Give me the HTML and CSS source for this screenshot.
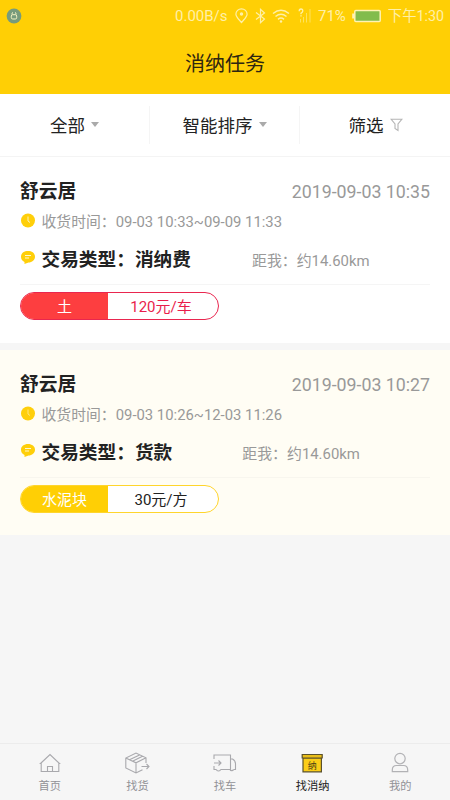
FILE: index.html
```html
<!DOCTYPE html>
<html lang="zh-CN">
<head>
<meta charset="utf-8">
<title>消纳任务</title>
<link rel="stylesheet" href="styles.css">
</head>
<body>
<header class="header">
  <div class="status">
    <svg class="lock" width="16" height="16" viewBox="0 0 16 16"><circle cx="8" cy="8" r="7.400" fill="#779b7c"/><rect x="5.300" y="6.700" width="5.400" height="4.300" rx="1.400" fill="none" stroke="#f4f3c4"/><path d="M6 6.500V5.200L7 4.500M10 6.500V5.200L9 4.500" fill="none" stroke="#f4f3c4"/></svg>
    <span class="speed">0.00B/s</span>
    <svg class="pin" width="13" height="16" viewBox="0 0 13 16" fill="none" stroke="#fff0a8" stroke-width="1.200"><path d="M6.500 14.500C4 11.500.9 8.800.9 6.200a5.600 5.400 0 0 1 11.200 0C12.100 8.800 9 11.500 6.500 14.500z"/><circle cx="6.500" cy="6" r="1.100" fill="#fff0a8"/></svg>
    <svg class="bt" width="11" height="16" viewBox="0 0 11 16" fill="none" stroke="#fff0a8" stroke-width="1.200"><path d="M1 4.500l8.500 6.500-4 3.700V1.300l4 3.700L1 11.500"/></svg>
    <svg class="wifi" width="18" height="16" viewBox="0 0 18 16" fill="none" stroke="#fff0a8" stroke-width="1.500"><path d="M1 5.500Q9-1 17 5.500M3.500 8.500Q9 4 14.500 8.500M6 11.300Q9 8.800 12 11.300"/><circle cx="9" cy="13.500" r="1.200" fill="#fff0a8" stroke="none"/></svg>
    <svg class="signal" width="14" height="16" viewBox="0 0 14 16" fill="none"><path d="M1.200 3.200Q1.200 1 3 1T4.800 3Q4.800 4.200 3 5.200V6.300M3 7.300V8.500" stroke="#fff0a8" stroke-width="1.300"/><path d="M2.500 11v3.500M5.500 9v5.500M8.500 5v9.500M12 1v13.500" stroke="#ffe25c"/></svg>
    <span class="percent">71%</span>
    <svg class="battery" width="30" height="14" viewBox="0 0 30 14"><rect x="2.800" y="1.600" width="25.400" height="10.800" rx="1" fill="#82bc4c" stroke="#fff3b5" stroke-width="1.500"/><path d="M1.200 4.500V9.500" stroke="#fff3b5" stroke-width="2"/></svg>
    <span class="clock">下午1:30</span>
  </div>
  <h1 class="title">消纳任务</h1>
</header>

<nav class="filters">
  <div class="filter">全部<i class="caret"></i></div>
  <div class="filter">智能排序<i class="caret"></i></div>
  <div class="filter filter-last">筛选<svg class="funnel" width="13" height="14" viewBox="0 0 13 14" fill="none" stroke="#b5b5b5" stroke-width="1.100"><path d="M1 1.200H12L8 6V12.500L5 10.500V6z"/></svg></div>
</nav>

<main class="list">
  <article class="card">
    <div class="head"><h2 class="name">舒云居</h2><time class="date">2019-09-03 10:35</time></div>
    <div class="period"><svg class="mark" width="15" height="15" viewBox="0 0 15 15"><circle cx="8" cy="7.500" r="7" fill="#ffcf0a"/><path d="M8 3.500V8L10 9.500" fill="none" stroke="#fff4b8"/></svg>收货时间：09-03 10:33~09-09 11:33</div>
    <div class="deal"><svg class="mark" width="15" height="15" viewBox="0 0 15 15"><path d="M8 1C12 1 15 3.300 15 6.700S12 12.300 8.500 12.500L4.500 14V12C2.300 11 1 9 1 6.700 1 3.300 4 1 8 1z" fill="#ffcf0a"/><path d="M5 5.500H11M5 8H9" stroke="#fff8d0"/></svg><strong class="kind">交易类型：消纳费</strong><span class="distance">距我：约14.60km</span></div>
    <div class="pill pill-red"><span class="material">土</span><span class="price">120元/车</span></div>
  </article>
  <article class="card card-tint">
    <div class="head"><h2 class="name">舒云居</h2><time class="date">2019-09-03 10:27</time></div>
    <div class="period"><svg class="mark" width="15" height="15" viewBox="0 0 15 15"><circle cx="8" cy="7.500" r="7" fill="#ffcf0a"/><path d="M8 3.500V8L10 9.500" fill="none" stroke="#ffe680"/></svg>收货时间：09-03 10:26~12-03 11:26</div>
    <div class="deal"><svg class="mark" width="15" height="15" viewBox="0 0 15 15"><path d="M8 1C12 1 15 3.300 15 6.700S12 12.300 8.500 12.500L4.500 14V12C2.300 11 1 9 1 6.700 1 3.300 4 1 8 1z" fill="#ffcf0a"/><path d="M5 5.500H11M5 8H9" stroke="#fff8d0"/></svg><strong class="kind">交易类型：货款</strong><span class="distance distance-wide">距我：约14.60km</span></div>
    <div class="pill"><span class="material">水泥块</span><span class="price">30元/方</span></div>
  </article>
</main>

<nav class="tabs">
  <div class="tab"><svg width="26" height="24" viewBox="0 0 26 24" fill="none" stroke="#a9a9ad" stroke-width="1.100"><path d="M3.500 12.500L13 3.500L22.500 12.500H21.800V20.500H4.200V12.500zM10.500 20.500V15.500H15.500V20.500"/></svg><span>首页</span></div>
  <div class="tab"><svg width="26" height="24" viewBox="0 0 26 24" fill="none" stroke="#a9a9ad" stroke-width="1.100"><path d="M22 12V6.800L12 2L1.800 7V17L12 22L18.500 18.800M1.800 7L12 11.800L22 6.800M12 11.800V22M5.500 8.800L15.500 4M8.500 10.200L18.500 5.200M17.500 15.500H25M22.500 13L25 15.500L22.500 18"/></svg><span>找货</span></div>
  <div class="tab"><svg width="26" height="24" viewBox="0 0 26 24" fill="none" stroke="#a9a9ad" stroke-width="1.100"><path d="M2 8V4H18.500V18.500H8.500M18.500 8H20.500Q23.500 9.500 23.500 13V18.500H21.500M2 15V18.500H4.500M2 12H9M6.500 9.500L9 12L6.500 14.500"/><path d="M4.500 18.500A2 1.500 0 0 0 8.500 18.500M18 18.500A1.800 1.500 0 0 0 21.500 18.500"/></svg><span>找车</span></div>
  <div class="tab tab-on"><svg width="26" height="24" viewBox="0 0 26 24"><path d="M3 7H21.400V20.800H3z" fill="#fbcd17" stroke="#5a512c" stroke-width="1.200"/><path d="M2.200 3.500H22.200V7H2.200z" fill="#e8bd18" stroke="#5a512c" stroke-width="1.200"/><text class="glyph" x="12.200" y="17.500">纳</text></svg><span>找消纳</span></div>
  <div class="tab"><svg width="26" height="24" viewBox="0 0 26 24" fill="none" stroke="#b2b2b5" stroke-width="1.200"><circle cx="13" cy="7.600" r="5.200"/><path d="M5.300 20.700V19Q5.300 14.500 9.500 14.500H16.500Q20.700 14.500 20.700 19V20.700z"/></svg><span>我的</span></div>
</nav>
</body>
</html>
```
FILE: styles.css
```css
* {
  box-sizing: border-box;
}

body {
  margin: 0;
  height: 800px;
  display: flex;
  flex-direction: column;
  overflow: hidden;
  background: #f6f6f6;
  color: #222;
  font-family: Roboto, "Noto Sans CJK SC", sans-serif;
}

svg {
  display: block;
  flex: none;
}

.header {
  height: 94px;
  flex: none;
  background: #ffcf05;
}

.status {
  display: flex;
  align-items: center;
  height: 31px;
  padding: 0 6px;
  color: #fff0a8;
  font-size: 15px;
  line-height: 31px;
  white-space: nowrap;
}

.speed {
  width: 52px;
  margin: 2px 0 0 153px;
}

.pin {
  margin-left: 8px;
}

.bt {
  margin-left: 7px;
}

.wifi {
  margin-left: 6px;
}

.signal {
  margin-left: 8px;
}

.percent {
  width: 28px;
  margin: 2px 0 0 6px;
}

.battery {
  margin-left: 6px;
}

.clock {
  margin: 2px 0 0 6px;
  font-size: 14.3px;
}

.title {
  margin: 0;
  padding-top: 17px;
  color: #2d2510;
  font-size: 20px;
  font-weight: 400;
  line-height: 32px;
  text-align: center;
}

.filters {
  display: flex;
  align-items: center;
  flex: none;
  height: 63px;
  background: #fff;
  border-bottom: 1px solid #f4f4f4;
}

.filter {
  display: flex;
  align-items: center;
  justify-content: center;
  flex: 1;
  height: 38px;
  padding-bottom: 1px;
  font-size: 17.5px;
}

.filter + .filter {
  border-left: 1px solid #f5f5f5;
}

.filter-last {
  padding-left: 1px;
}

.caret {
  margin-left: 6px;
  border: 4px solid transparent;
  border-top: 5px solid #aaa;
  border-bottom: 0;
}

.funnel {
  margin-left: 6px;
}

.list {
  display: flex;
  flex-direction: column;
  gap: 7px;
  flex: 1;
}

.card {
  height: 186px;
  padding: 19px 20px 0;
  background: #fff;
}

.card-tint {
  height: 185px;
  background: #fffdf4;
}

.head {
  display: flex;
  align-items: center;
  justify-content: space-between;
  height: 30px;
}

.name {
  margin: 0;
  padding-top: 2px;
  font-size: 18.75px;
  line-height: 30px;
}

.date {
  padding-top: 1px;
  color: #999;
  font-size: 17.75px;
}

.period {
  display: flex;
  align-items: center;
  height: 30px;
  padding-bottom: 2px;
  color: #999;
  font-size: 14.85px;
}

.mark {
  margin-right: 6.500px;
}

.deal {
  display: flex;
  align-items: center;
  height: 49px;
  padding-bottom: 5px;
  border-bottom: 1px solid #f5f5f5;
}

.card-tint .deal {
  border-color: #f8f6ee;
}

.kind {
  font-size: 18.7px;
}

.distance {
  margin-left: 61px;
  padding-top: 3px;
  color: #999;
  font-size: 14.9px;
}

.distance-wide {
  margin-left: 70px;
}

.pill {
  display: flex;
  width: 199px;
  height: 28px;
  margin-top: 7px;
  overflow: hidden;
  background: #fff;
  border: 1px solid #ffd52c;
  border-radius: 14px;
  font-size: 15px;
  line-height: 28px;
  text-align: center;
}

.material {
  width: 87px;
  background: #ffcf05;
  color: #fff;
}

.price {
  flex: 1;
  padding-right: 4px;
}

.pill-red {
  border-color: #e9264f;
  color: #e91e4c;
}

.pill-red .material {
  background: #fd3e40;
}

.tabs {
  display: flex;
  flex: none;
  height: 57px;
  padding: 0 6px;
  border-top: 1px solid #ececec;
  color: #929297;
  font-size: 11.25px;
}

.tab {
  display: flex;
  flex: 1;
  flex-direction: column;
  align-items: center;
  padding-top: 7px;
}

.tab span {
  margin-top: 4px;
  line-height: 16px;
}

.tab-on {
  color: #222;
}

.glyph {
  fill: #4c4215;
  font-size: 9px;
  text-anchor: middle;
}
```
